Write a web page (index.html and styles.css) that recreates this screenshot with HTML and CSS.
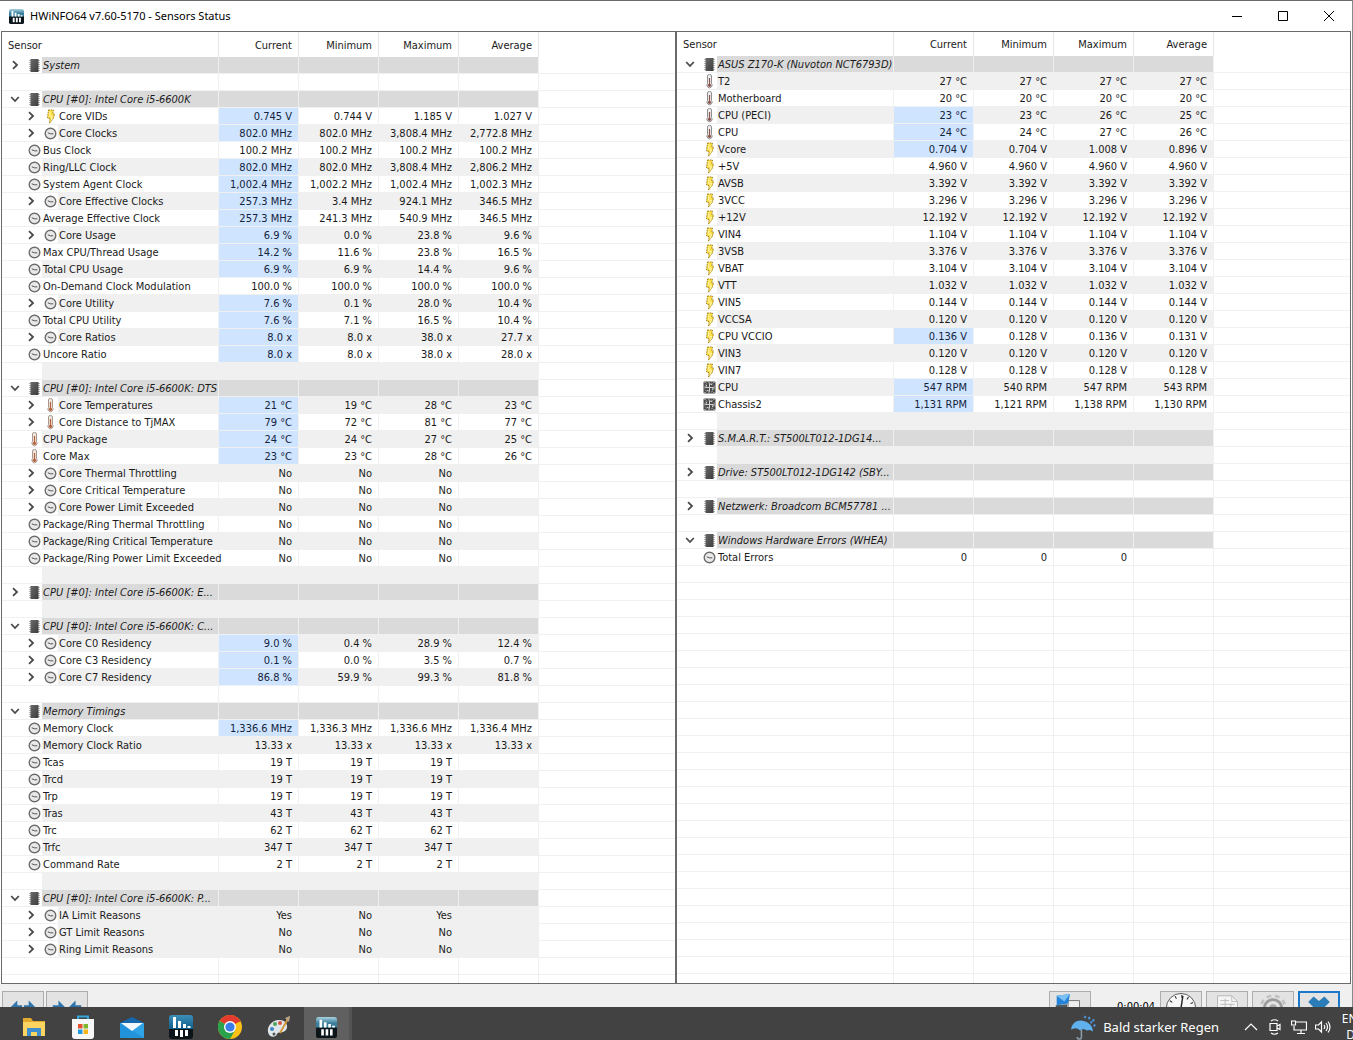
FILE: index.html
```html
<!DOCTYPE html>
<html lang="en">
<head>
  <title>HWiNFO64 v7.60-5170 - Sensors Status</title>
  <meta charset="utf-8">
  <meta name="viewport" content="width=device-width, initial-scale=1">
  <link rel="stylesheet" href="styles.css">
</head>
<body>
  <svg class="sprite" aria-hidden="true">
    <linearGradient id="blue-top" x1="0" y1="0" x2="0" y2="1">
      <stop offset="0" stop-color="#3d8fb8"/><stop offset="1" stop-color="#0f5f8a"/>
    </linearGradient>
    <linearGradient id="metal" x1="0" y1="0" x2="0" y2="1">
      <stop offset="0" stop-color="#a9d3e2"/><stop offset=".5" stop-color="#3b7f9c"/>
    </linearGradient>
    <linearGradient id="chip-fill" x1="0" y1="0" x2="1" y2="1">
      <stop offset="0" stop-color="#6b6b6b"/><stop offset="1" stop-color="#3c3c3c"/>
    </linearGradient>
    <symbol id="chip" viewBox="0 0 13 15">
      <path d="M1 2.5h11M1 4.5h11M1 6.5h11M1 8.5h11M1 10.5h11M1 12.5h11" stroke="#b4b4b4"/>
      <rect x="2.5" y="1" width="8" height="13" fill="url(#chip-fill)"/>
    </symbol>
    <symbol id="clock" viewBox="0 0 13 15">
      <circle cx="6.5" cy="7.5" r="5.3" fill="#e9e9e9" stroke="#6c6c6c" stroke-width="1.4"/>
      <path d="M3.8 6.8l2.7 1h2.8" fill="none" stroke="#555"/>
    </symbol>
    <symbol id="volt" viewBox="0 0 13 15">
      <path d="M4.5 1h5L8.7 5h1.8L9.3 9.3 5.5 14.2 6.2 9.5 3.5 9 4 5z" fill="#ffe14a" stroke="#a58418" stroke-dasharray="1.6 .8"/>
      <path d="M6 2.5L5.5 7l3 .5-1.5 4" fill="none" stroke="#fff6b0"/>
    </symbol>
    <symbol id="temp" viewBox="0 0 13 15">
      <path d="M4.500 2a2 1.600 0 0 1 4 0v7.500a2.600 2.600 0 1 1-4 0z" fill="#f1e6de" stroke="#a8988f"/>
      <path d="M6.5 4v7" stroke="#b5603a" stroke-width="1.2"/>
      <circle cx="6.5" cy="11.3" r="1.6" fill="#b5603a"/>
    </symbol>
    <symbol id="temp-board" viewBox="0 0 13 15">
      <path d="M4.500 2a2 1.600 0 0 1 4 0v7.500a2.600 2.600 0 1 1-4 0z" fill="#eee" stroke="#8f8f8f"/>
      <path d="M6.5 4v7" stroke="#8d5550" stroke-width="1.2"/>
      <circle cx="6.5" cy="11.3" r="1.6" fill="#8d5550"/>
    </symbol>
    <symbol id="fan" viewBox="0 0 13 15">
      <rect x=".5" y="1.5" width="12" height="12" rx="1" fill="#4a4a4a"/>
      <circle cx="6.5" cy="7.5" r="4.8" fill="none" stroke="#aaa" stroke-dasharray="2.2 1.2"/>
      <path d="M6.5 7.5V3.6L9 4.8M6.5 7.5h3.9L9.2 10M6.5 7.5v3.9L4 10.2M6.5 7.5H2.6L3.8 5" fill="none" stroke="#d5d5d5"/>
      <path d="M1.5 2.5h1M10.5 2.5h1M1.5 12.5h1M10.5 12.5h1" stroke="#ddd"/>
    </symbol>
    <symbol id="closed" viewBox="0 0 10 10">
      <path d="M3 1.2L7 5 3 8.8" fill="none" stroke="#4a4a4a" stroke-width="1.8"/>
    </symbol>
    <symbol id="open" viewBox="0 0 10 10">
      <path d="M1.2 3L5 7l3.800-4" fill="none" stroke="#4a4a4a" stroke-width="1.8"/>
    </symbol>
    <symbol id="hwinfo" viewBox="0 0 24 24">
      <path d="M3 0h18a3 3 0 0 1 3 3v11H0V3a3 3 0 0 1 3-3z" fill="url(#blue-top)"/>
      <path d="M0 14h24v7a3 3 0 0 1-3 3H3a3 3 0 0 1-3-3z" fill="#0b1418"/>
      <path d="M5.500 2v11M10.500 6v7M15.500 9v4M20 11v2" stroke="#fff" stroke-width="3"/>
      <path d="M7.500 15v6M12.500 15v7M17.500 15v6" stroke="#fff" stroke-width="3"/>
    </symbol>
    <symbol id="hwinfo-run" viewBox="0 0 24 24">
      <path d="M3 0h18a3 3 0 0 1 3 3v11H0V3a3 3 0 0 1 3-3z" fill="url(#metal)"/>
      <path d="M0 12h24v9a3 3 0 0 1-3 3H3a3 3 0 0 1-3-3z" fill="#0b1418"/>
      <path d="M5.500 3v9M10.500 6v6M15.500 8v4M20 10v2" stroke="#fff" stroke-width="3"/>
      <path d="M7.500 14v7M12.500 14v7M17.500 14v7" stroke="#fff" stroke-width="3"/>
    </symbol>
  </svg>

  <header class="titlebar">
    <svg class="app-icon"><use href="#hwinfo-run"/></svg>
    <h1>HWiNFO64 v7.60-5170 - Sensors Status</h1>
    <div class="window-controls">
      <button type="button" aria-label="Minimize"><svg viewBox="0 0 12 12"><path d="M1 6.500h10"/></svg></button>
      <button type="button" aria-label="Maximize"><svg viewBox="0 0 12 12"><path d="M1.500 1.500h9v9h-9z"/></svg></button>
      <button type="button" aria-label="Close"><svg viewBox="0 0 12 12"><path d="M1 1l10 10M11 1L1 11"/></svg></button>
    </div>
  </header>

  <main class="panes">
    <section class="pane">
      <table class="sensors">
        <colgroup><col class="name-col"><col class="value-col"><col class="value-col"><col class="value-col"><col class="value-col"><col></colgroup>
        <thead><tr><th>Sensor</th><th>Current</th><th>Minimum</th><th>Maximum</th><th>Average</th><th></th></tr></thead>
        <tbody id="left"></tbody>
      </table>
    </section>
    <section class="pane pane-right">
      <table class="sensors">
        <colgroup><col class="name-col"><col class="value-col"><col class="value-col"><col class="value-col"><col class="value-col"><col></colgroup>
        <thead><tr><th>Sensor</th><th>Current</th><th>Minimum</th><th>Maximum</th><th>Average</th><th></th></tr></thead>
        <tbody id="right"></tbody>
      </table>
    </section>
  </main>

  <footer class="toolbar">
    <div class="tools tools-columns">
      <button type="button" class="tool" aria-label="Expand columns">
        <svg viewBox="0 0 40 40"><path d="M6 17l8-8v5h5v6h-5v5zM34 17l-8-8v5h-5v6h5v5z" fill="#2f74ad"/></svg>
      </button>
      <button type="button" class="tool" aria-label="Shrink columns">
        <svg viewBox="0 0 40 40"><path d="M19 17l-8-8v5H5v6h6v5zM21 17l8-8v5h6v6h-6v5z" fill="#2f74ad"/></svg>
      </button>
    </div>
    <div class="tools">
      <button type="button" class="tool" aria-label="Remote monitoring">
        <svg viewBox="0 0 40 40"><path d="M18 9h12v10H18z" fill="#eee" stroke="#777"/><path d="M6 4l14-2-2 10-12 2z" fill="#2383d8"/><path d="M6 4l14-2-6 8z" fill="#7cc0f4"/><path d="M5 14l12-1v4H5z" fill="#4b5962"/></svg>
      </button>
      <time class="elapsed">0:00:04</time>
      <button type="button" class="tool" aria-label="Reset clock">
        <svg viewBox="0 0 40 40"><circle cx="20" cy="17" r="15.500" fill="#f7f7f7" stroke="#555"/><circle cx="20" cy="17" r="12.500" fill="none" stroke="#222" stroke-width="3" stroke-dasharray="1 5.545"/><path d="M20 17l2-13M20 17v9" stroke="#222" stroke-width="1.500"/></svg>
      </button>
      <button type="button" class="tool" aria-label="Start logging">
        <svg viewBox="0 0 40 40"><path d="M10 4h15l6 6v26H10z" fill="#f4f4f4" stroke="#b5b5b5"/><path d="M25 4v6h6M13 9h9M13 13h15M13 17h15M18 7v16M24 12v11" fill="none" stroke="#bdbdbd"/></svg>
      </button>
      <button type="button" class="tool" aria-label="Settings">
        <svg viewBox="0 0 40 40"><circle cx="20" cy="17" r="13" fill="none" stroke="#c2c2c2" stroke-width="3" stroke-dasharray="5 4"/><circle cx="20" cy="17" r="9" fill="none" stroke="#9c9c9c" stroke-width="3"/><circle cx="20" cy="17" r="4" fill="#aaa"/></svg>
      </button>
      <button type="button" class="tool tool-focus" aria-label="Close sensors">
        <svg viewBox="0 0 40 40"><path d="M8 10l6-6 6 5 6-5 6 6-6 6 6 6-6 6-6-6-6 6-6-6 6-6z" fill="#2a7db9"/></svg>
      </button>
    </div>
  </footer>

  <nav class="taskbar">
    <div class="apps">
      <button type="button" aria-label="File Explorer"><svg viewBox="0 0 24 24"><path d="M1 3h8l2 3h12v15H1z" fill="#e3a92d"/><path d="M1 7h22v14H1z" fill="#fbd560"/><path d="M5 21v-8h14v8h-4v-4H9v4z" fill="#3f8ed0"/></svg></button>
      <button type="button" aria-label="Microsoft Store"><svg viewBox="0 0 24 24"><path d="M7 5V1.500h10V5" fill="none" stroke="#37a5dc" stroke-width="2"/><path d="M1 4h22v17a3 3 0 0 1-3 3H4a3 3 0 0 1-3-3z" fill="#f7f7f7"/><path d="M7 9h4.500v4.500H7z" fill="#e5502a"/><path d="M12.500 9H17v4.500h-4.500z" fill="#7db52c"/><path d="M7 14.500h4.500V19H7z" fill="#1c9be0"/><path d="M12.500 14.500H17V19h-4.500z" fill="#f4b51c"/></svg></button>
      <button type="button" aria-label="Mail"><svg viewBox="0 0 24 24"><path d="M0 8l12-6 12 6v4H0z" fill="#1568ae"/><path d="M0 8h24v15H0z" fill="#2ea4e7"/><path d="M0 8l24 15H0z" fill="#1b88d2" opacity=".6"/><path d="M1 8h22l-11 8z" fill="#f2f8fc"/></svg></button>
      <button type="button" aria-label="HWiNFO64"><svg><use href="#hwinfo"/></svg></button>
      <button type="button" aria-label="Chrome"><svg viewBox="0 0 24 24"><circle cx="12" cy="12" r="12" fill="#fbc116"/><path d="M12 12L1.600 6A12 12 0 0 1 22.400 6z" fill="#e33b2e"/><path d="M12 12L1.600 6A12 12 0 0 0 12 24l5.200-9z" fill="#2ba24c"/><path d="M12 6h10.400" stroke="#e33b2e"/><circle cx="12" cy="12" r="6" fill="#fff"/><circle cx="12" cy="12" r="4.600" fill="#3b7de8"/></svg></button>
      <button type="button" aria-label="Paint"><svg viewBox="0 0 24 24"><path d="M11 5C4 6 0 12 1 17c1 6 8 6 9 2 1-3 5 0 9-4 3-4 0-11-8-10z" fill="#dfe6ea"/><circle cx="5" cy="14" r="2" fill="#3c86c8"/><circle cx="8" cy="9" r="2" fill="#4fa55a"/><circle cx="13" cy="8" r="2" fill="#d95341"/><circle cx="7" cy="19" r="1.500" fill="#555"/><path d="M22 2l-9 16" stroke="#d7973c" stroke-width="2"/><path d="M18 3l5-2-1 6z" fill="#b8a58a"/></svg></button>
      <button type="button" class="current" aria-label="HWiNFO64 sensors"><svg viewBox="0 0 24 24"><use href="#hwinfo-run"/></svg></button>
    </div>
    <div class="tray">
      <button type="button" class="weather">
        <svg viewBox="0 0 24 24"><path d="M0 14C1 7 7 4 13 6s8 6 8 10c-2-2-4-2-6-1-2-2-4-2-6 0-3-3-6-3-9-1z" fill="#5fb0ec"/><path d="M10 14v7a2 2 0 0 1-4 0" fill="none" stroke="#8a9aa6" stroke-width="1.500"/><path d="M13 3l1-2M17 4l1-2M21 6l1-2M19 8l1-2M22 11l1-2" stroke="#4a93d8" stroke-width="2"/></svg>
        Bald starker Regen
      </button>
      <button type="button" class="tray-icon" aria-label="Show hidden icons"><svg viewBox="0 0 16 16"><path d="M2 11l6-6 6 6"/></svg></button>
      <button type="button" class="tray-icon" aria-label="Meet now"><svg viewBox="0 0 16 16"><path d="M3 4.500h7v7H3zM10 7l3-1.500v5L10 9M4 2q3.500-2.500 7 0M4 14q3.500 2.500 7 0"/></svg></button>
      <button type="button" class="tray-icon" aria-label="Network"><svg viewBox="0 0 16 16"><path d="M5 3h10.500v8H3V7M10 11v3M6 14.500h8M.500 2h4v4h-4z"/></svg></button>
      <button type="button" class="tray-icon" aria-label="Volume"><svg viewBox="0 0 16 16"><path d="M.500 6h3l3-3v10l-3-3h-3zM9 6q1.500 2 0 4M11 4q3 4 0 8M13 2.500q4 5.500 0 11"/></svg></button>
      <button type="button" class="language">ENG<br>DE</button>
    </div>
  </nav>
  <script src="sensors.js"></script>
</body>
</html>
```
FILE: styles.css
```css
* {
    box-sizing: border-box;
}
body {
    display: flex;
    flex-direction: column;
    height: 100vh;
    margin: 0;
    overflow: hidden;
    font: 11px/16px "DejaVu Sans Condensed", "DejaVu Sans", sans-serif;
    color: #1a1a1a;
    background: #f0f0f0;
}
button {
    padding: 0;
    border: 0;
    font: inherit;
    color: inherit;
    background: none;
}
.sprite {
    position: absolute;
    width: 0;
    height: 0;
}

/* title bar */
.titlebar {
    display: flex;
    flex: none;
    align-items: center;
    height: 31px;
    padding-left: 9px;
    border-top: 1px solid #6a6a6a;
    border-right: 1px solid #8a8a8a;
    background: #fff;
}
.app-icon {
    width: 15px;
    height: 15px;
}
.titlebar h1 {
    flex: 1;
    margin: 0 0 0 6px;
    font: 11px/16px "Noto Sans", sans-serif;
    color: #000;
}
.window-controls {
    display: flex;
}
.window-controls button {
    display: flex;
    align-items: center;
    justify-content: center;
    width: 46px;
    height: 28px;
}
.window-controls svg {
    width: 12px;
    height: 12px;
    fill: none;
    stroke: #000;
}

/* sensor panes */
.panes {
    display: flex;
    flex: 1;
    min-height: 0;
    padding: 0 1px;
    border-right: 1px solid #8a8a8a;
    background: #fff;
}
.pane {
    flex: 1 1 0;
    min-width: 0;
    overflow: hidden;
    border: 1px solid #6a6a6a;
    border-right: 0;
}
.pane-right {
    border-left: 2px solid #6a6a6a;
    border-right: 1px solid #6a6a6a;
}
.sensors {
    width: 100%;
    table-layout: fixed;
    border-spacing: 0;
}
.name-col {
    width: 217px;
}
.value-col {
    width: 80px;
}
.sensors th {
    height: 25px;
    padding: 2px 6px 0;
    border-right: 1px solid #e5e5e5;
    font-weight: normal;
    text-align: right;
}
.pane-right th {
    height: 24px;
}
.sensors th:first-child {
    text-align: left;
}
.sensors td {
    height: 17px;
    padding: 2px 6px 0 0;
    border-right: 1px solid #f0f0f0;
    border-bottom: 1px solid #f0f0f0;
    line-height: 14px;
    text-align: right;
    white-space: nowrap;
}
.sensors th:last-child,
.sensors td:last-child {
    border-right: 0;
}
.sensors td:first-child {
    padding: 0;
}
.name {
    display: flex;
    height: 16px;
    text-align: left;
}
.tree {
    display: flex;
    flex: none;
    align-items: center;
    justify-content: flex-end;
    width: 40px;
    padding-right: 1px;
}
.child .tree {
    width: 56px;
}
.toggle {
    display: flex;
    margin-right: 8px;
}
.toggle svg {
    width: 10px;
    height: 10px;
}
.sensor-icon {
    width: 13px;
    height: 15px;
}
.label {
    flex: 1;
    min-width: 0;
    padding: 2px 0 0 1px;
}
.stripe .label,
.stripe .value {
    background: #f0f0f0;
}
.group .label,
.group .value {
    font-style: italic;
    background: #dadada;
}
.sensors .changed {
    color: #14233c;
    background: #cfe4ff;
}

/* bottom buttons, the taskbar covers their lower half */
.toolbar {
    display: flex;
    flex: none;
    justify-content: space-between;
    height: 23px;
    padding: 7px 12px 0 2px;
    overflow: hidden;
    border-right: 1px solid #8a8a8a;
}
.tools {
    display: flex;
    align-items: flex-start;
    gap: 4px;
}
.tools-columns {
    gap: 2px;
}
.tool {
    flex: none;
    width: 42px;
    height: 40px;
    border: 1px solid #adadad;
    background: #e3e3e3;
}
.tool svg {
    display: block;
    width: 40px;
    height: 38px;
}
.tool-focus {
    border: 2px solid #1a78c8;
}
.tool-focus svg {
    width: 38px;
    height: 36px;
}
.elapsed {
    width: 61px;
    padding: 8px 0 0 22px;
    color: #000;
}

/* taskbar */
.taskbar {
    display: flex;
    flex: none;
    justify-content: space-between;
    height: 33px;
    overflow: hidden;
    color: #fff;
    background: #424242;
}
.apps,
.tray {
    display: flex;
    height: 40px;
}
.apps {
    gap: 1px;
    padding-left: 10px;
}
.apps button,
.tray-icon {
    display: flex;
    align-items: center;
    justify-content: center;
}
.apps button {
    width: 48px;
}
.apps svg {
    width: 24px;
    height: 24px;
}
.apps .current {
    border-right: 3px solid #545454;
    background: #606060;
}
.apps .current svg {
    width: 21px;
    height: 21px;
}
.tray {
    margin-right: -20px;
}
.weather {
    display: flex;
    align-items: center;
    gap: 7px;
    margin-right: 20px;
    font: 13px/20px "Noto Sans", sans-serif;
}
.weather svg {
    width: 25px;
    height: 25px;
}
.tray-icon {
    width: 24px;
}
.tray-icon svg {
    width: 16px;
    height: 16px;
    fill: none;
    stroke: #fff;
    stroke-width: 1.2;
}
.language {
    width: 38px;
    font: 12px/16px "Noto Sans", sans-serif;
    text-align: center;
}
```
FILE: sensors.js
```js
// group rows:  { group, open, hidden }
// sensor rows: [icon, name, current, minimum, maximum, average, flags]
// flags: "+" has children, "*" current value changed, "h" odd number of hidden children
var left = [
  { group: 'System' },
  {},
  { group: 'CPU [#0]: Intel Core i5-6600K', open: true },
  ['volt', 'Core VIDs', '0.745 V', '0.744 V', '1.185 V', '1.027 V', '+*'],
  ['clock', 'Core Clocks', '802.0 MHz', '802.0 MHz', '3,808.4 MHz', '2,772.8 MHz', '+*'],
  ['clock', 'Bus Clock', '100.2 MHz', '100.2 MHz', '100.2 MHz', '100.2 MHz', ''],
  ['clock', 'Ring/LLC Clock', '802.0 MHz', '802.0 MHz', '3,808.4 MHz', '2,806.2 MHz', '*'],
  ['clock', 'System Agent Clock', '1,002.4 MHz', '1,002.2 MHz', '1,002.4 MHz', '1,002.3 MHz', '*'],
  ['clock', 'Core Effective Clocks', '257.3 MHz', '3.4 MHz', '924.1 MHz', '346.5 MHz', '+*'],
  ['clock', 'Average Effective Clock', '257.3 MHz', '241.3 MHz', '540.9 MHz', '346.5 MHz', '*'],
  ['clock', 'Core Usage', '6.9 %', '0.0 %', '23.8 %', '9.6 %', '+*'],
  ['clock', 'Max CPU/Thread Usage', '14.2 %', '11.6 %', '23.8 %', '16.5 %', '*'],
  ['clock', 'Total CPU Usage', '6.9 %', '6.9 %', '14.4 %', '9.6 %', '*'],
  ['clock', 'On-Demand Clock Modulation', '100.0 %', '100.0 %', '100.0 %', '100.0 %', ''],
  ['clock', 'Core Utility', '7.6 %', '0.1 %', '28.0 %', '10.4 %', '+*'],
  ['clock', 'Total CPU Utility', '7.6 %', '7.1 %', '16.5 %', '10.4 %', '*'],
  ['clock', 'Core Ratios', '8.0 x', '8.0 x', '38.0 x', '27.7 x', '+*'],
  ['clock', 'Uncore Ratio', '8.0 x', '8.0 x', '38.0 x', '28.0 x', '*'],
  {},
  { group: 'CPU [#0]: Intel Core i5-6600K: DTS', open: true },
  ['temp', 'Core Temperatures', '21 °C', '19 °C', '28 °C', '23 °C', '+*'],
  ['temp', 'Core Distance to TjMAX', '79 °C', '72 °C', '81 °C', '77 °C', '+*'],
  ['temp', 'CPU Package', '24 °C', '24 °C', '27 °C', '25 °C', '*'],
  ['temp', 'Core Max', '23 °C', '23 °C', '28 °C', '26 °C', '*'],
  ['clock', 'Core Thermal Throttling', 'No', 'No', 'No', '', '+'],
  ['clock', 'Core Critical Temperature', 'No', 'No', 'No', '', '+'],
  ['clock', 'Core Power Limit Exceeded', 'No', 'No', 'No', '', '+'],
  ['clock', 'Package/Ring Thermal Throttling', 'No', 'No', 'No', '', ''],
  ['clock', 'Package/Ring Critical Temperature', 'No', 'No', 'No', '', ''],
  ['clock', 'Package/Ring Power Limit Exceeded', 'No', 'No', 'No', '', ''],
  {},
  { group: 'CPU [#0]: Intel Core i5-6600K: E...' },
  {},
  { group: 'CPU [#0]: Intel Core i5-6600K: C...', open: true },
  ['clock', 'Core C0 Residency', '9.0 %', '0.4 %', '28.9 %', '12.4 %', '+*'],
  ['clock', 'Core C3 Residency', '0.1 %', '0.0 %', '3.5 %', '0.7 %', '+*'],
  ['clock', 'Core C7 Residency', '86.8 %', '59.9 %', '99.3 %', '81.8 %', '+*'],
  {},
  { group: 'Memory Timings', open: true },
  ['clock', 'Memory Clock', '1,336.6 MHz', '1,336.3 MHz', '1,336.6 MHz', '1,336.4 MHz', '*'],
  ['clock', 'Memory Clock Ratio', '13.33 x', '13.33 x', '13.33 x', '13.33 x', ''],
  ['clock', 'Tcas', '19 T', '19 T', '19 T', '', ''],
  ['clock', 'Trcd', '19 T', '19 T', '19 T', '', ''],
  ['clock', 'Trp', '19 T', '19 T', '19 T', '', ''],
  ['clock', 'Tras', '43 T', '43 T', '43 T', '', ''],
  ['clock', 'Trc', '62 T', '62 T', '62 T', '', ''],
  ['clock', 'Trfc', '347 T', '347 T', '347 T', '', ''],
  ['clock', 'Command Rate', '2 T', '2 T', '2 T', '', ''],
  {},
  { group: 'CPU [#0]: Intel Core i5-6600K: P...', open: true },
  ['clock', 'IA Limit Reasons', 'Yes', 'No', 'Yes', '', '+h'],
  ['clock', 'GT Limit Reasons', 'No', 'No', 'No', '', '+h'],
  ['clock', 'Ring Limit Reasons', 'No', 'No', 'No', '', '+']
];

var right = [
  { group: 'ASUS Z170-K (Nuvoton NCT6793D)', open: true },
  ['temp-board', 'T2', '27 °C', '27 °C', '27 °C', '27 °C', ''],
  ['temp-board', 'Motherboard', '20 °C', '20 °C', '20 °C', '20 °C', ''],
  ['temp-board', 'CPU (PECI)', '23 °C', '23 °C', '26 °C', '25 °C', '*'],
  ['temp-board', 'CPU', '24 °C', '24 °C', '27 °C', '26 °C', '*'],
  ['volt', 'Vcore', '0.704 V', '0.704 V', '1.008 V', '0.896 V', '*'],
  ['volt', '+5V', '4.960 V', '4.960 V', '4.960 V', '4.960 V', ''],
  ['volt', 'AVSB', '3.392 V', '3.392 V', '3.392 V', '3.392 V', ''],
  ['volt', '3VCC', '3.296 V', '3.296 V', '3.296 V', '3.296 V', ''],
  ['volt', '+12V', '12.192 V', '12.192 V', '12.192 V', '12.192 V', ''],
  ['volt', 'VIN4', '1.104 V', '1.104 V', '1.104 V', '1.104 V', ''],
  ['volt', '3VSB', '3.376 V', '3.376 V', '3.376 V', '3.376 V', ''],
  ['volt', 'VBAT', '3.104 V', '3.104 V', '3.104 V', '3.104 V', ''],
  ['volt', 'VTT', '1.032 V', '1.032 V', '1.032 V', '1.032 V', ''],
  ['volt', 'VIN5', '0.144 V', '0.144 V', '0.144 V', '0.144 V', ''],
  ['volt', 'VCCSA', '0.120 V', '0.120 V', '0.120 V', '0.120 V', ''],
  ['volt', 'CPU VCCIO', '0.136 V', '0.128 V', '0.136 V', '0.131 V', '*'],
  ['volt', 'VIN3', '0.120 V', '0.120 V', '0.120 V', '0.120 V', ''],
  ['volt', 'VIN7', '0.128 V', '0.128 V', '0.128 V', '0.128 V', ''],
  ['fan', 'CPU', '547 RPM', '540 RPM', '547 RPM', '543 RPM', '*'],
  ['fan', 'Chassis2', '1,131 RPM', '1,121 RPM', '1,138 RPM', '1,130 RPM', '*'],
  {},
  { group: 'S.M.A.R.T.: ST500LT012-1DG14...' },
  {},
  { group: 'Drive: ST500LT012-1DG142 (SBY...', hidden: 1 },
  {},
  { group: 'Netzwerk: Broadcom BCM57781 ...' },
  {},
  { group: 'Windows Hardware Errors (WHEA)', open: true },
  ['clock', 'Total Errors', '0', '0', '0', '', '']
];

function icon(id, cls) {
  return '<svg class="' + (cls || '') + '"><use href="#' + id + '"/></svg>';
}

function toggle(open, name) {
  return '<button type="button" class="toggle" aria-expanded="' + !!open + '" aria-label="' + name + '">' +
    icon(open ? 'open' : 'closed') + '</button>';
}

function row(cls, tree, label, values, changed) {
  var html = '<tr class="' + cls + '"><td><div class="name"><span class="tree">' + tree +
    '</span><span class="label">' + label + '</span></div></td>';
  values.forEach(function (value, i) {
    html += '<td class="value' + (changed && i === 0 ? ' changed' : '') + '">' + value + '</td>';
  });
  return html + '<td></td></tr>';
}

function render(id, rows, firstStripe) {
  var empty = ['', '', '', ''];
  var html = '';
  var index = firstStripe;
  rows.forEach(function (r) {
    var stripe = index % 2 ? ' stripe' : '';
    if (r.group) {
      html += row('group', toggle(r.open, r.group) + icon('chip', 'sensor-icon'), r.group, empty);
      index += r.hidden || 0;
    } else if (r.length) {
      var flags = r[6];
      var child = flags.indexOf('+') > -1;
      html += row((child ? 'child' : '') + stripe,
        (child ? toggle(false, r[1]) : '') + icon(r[0], 'sensor-icon'),
        r[1], r.slice(2, 6), flags.indexOf('*') > -1);
      index += flags.indexOf('h') > -1 ? 1 : 0;
    } else {
      html += row(stripe, '', '', empty);
    }
    index++;
  });
  // blank grid lines down to the bottom of the pane
  for (var i = rows.length; i < 80; i++) {
    html += row('', '', '', empty);
  }
  document.getElementById(id).innerHTML = html;
}

render('left', left, 1);
render('right', right, 0);
```
